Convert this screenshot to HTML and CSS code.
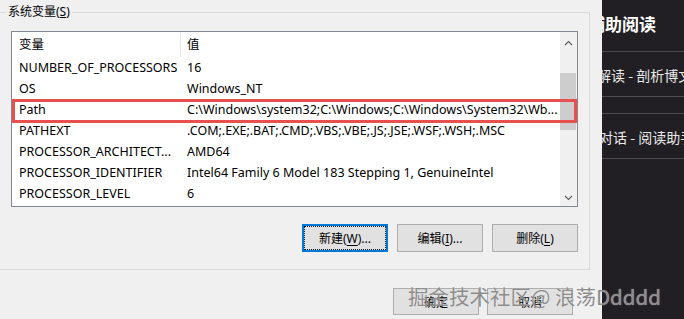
FILE: index.html
```html
<!DOCTYPE html>
<html lang="zh-CN">
<head>
    <meta charset="UTF-8">
    <title>环境变量</title>
    <link rel="stylesheet" href="styles.css">
</head>
<body>
    <div class="screen">
        <div class="dialog">
            <fieldset class="group">
                <legend class="group-title">系统变量(<u>S</u>)</legend>
                <div class="list">
                    <div class="list-body">
                        <div class="row head"><span class="name">变量</span><span class="value">值</span></div>
                        <div class="row"><span class="name">NUMBER_OF_PROCESSORS</span><span class="value">16</span></div>
                        <div class="row"><span class="name">OS</span><span class="value">Windows_NT</span></div>
                        <div class="row"><span class="name">Path</span><span class="value">C:\Windows\system32;C:\Windows;C:\Windows\System32\Wb...</span></div>
                        <div class="row"><span class="name">PATHEXT</span><span class="value">.COM;.EXE;.BAT;.CMD;.VBS;.VBE;.JS;.JSE;.WSF;.WSH;.MSC</span></div>
                        <div class="row"><span class="name">PROCESSOR_ARCHITECT...</span><span class="value">AMD64</span></div>
                        <div class="row"><span class="name">PROCESSOR_IDENTIFIER</span><span class="value">Intel64 Family 6 Model 183 Stepping 1, GenuineIntel</span></div>
                        <div class="row"><span class="name">PROCESSOR_LEVEL</span><span class="value">6</span></div>
                    </div>
                    <div class="scrollbar">
                        <span class="arrow">
                            <svg width="9" height="6" viewBox="0 0 9 6"><path d="M1 5 L4.5 1.5 L8 5" fill="none" stroke="#606060" stroke-width="1.2"/></svg>
                        </span>
                        <span class="track"><span class="thumb"></span></span>
                        <span class="arrow">
                            <svg width="9" height="6" viewBox="0 0 9 6"><path d="M1 1 L4.5 4.5 L8 1" fill="none" stroke="#606060" stroke-width="1.2"/></svg>
                        </span>
                    </div>
                    <!-- annotation box round the Path row -->
                    <div class="mark"></div>
                </div>
                <div class="actions">
                    <button class="btn focused">新建(<u>W</u>)...</button>
                    <button class="btn">编辑(<u>I</u>)...</button>
                    <button class="btn">删除(<u>L</u>)</button>
                </div>
            </fieldset>
            <div class="footer">
                <button class="btn short">确定</button>
                <button class="btn short">取消</button>
            </div>
        </div>

        <aside class="side">
            <div class="side-title">辅助阅读</div>
            <div class="side-item">解读 - 剖析博文</div>
            <div class="side-item spaced">对话 - 阅读助手</div>
        </aside>

        <div class="watermark">掘金技术社区@ 浪荡Ddddd</div>
    </div>
</body>
</html>
```

FILE: styles.css
```css
body {
    margin: 0;
    background-color: #f0f0f0;
    color: #000;
    font-family: "Noto Sans", "Noto Sans CJK SC", sans-serif;
    font-size: 12px;
}

.screen {
    position: relative;
    display: flex;
    width: 684px;
    height: 319px;
    overflow: hidden;
}

.dialog {
    flex: none;
    width: 602px;
    display: flex;
    flex-direction: column;
}

.group {
    margin: 4px 12px 0 0;
    padding: 11px 11px 17px 11px;
    border: 1px solid #d9d9d9;
    border-left: 0;
    min-width: 0;
}

.group-title {
    margin-left: -5px;
    padding: 0 2px;
    line-height: 16px;
}

.list {
    position: relative;
    display: flex;
    height: 174px;
    border: 1px solid #828790;
    background-color: #fff;
    font-size: 12.5px;
}

.list-body {
    flex: 1;
    overflow: hidden;
}

.row {
    display: flex;
    height: 21px;
    line-height: 21px;
    white-space: nowrap;
}

.row.head {
    height: 25px;
    line-height: 25px;
}

.name {
    flex: none;
    width: 162px;
    padding-left: 7px;
}

.value {
    padding-left: 6px;
}

.head .name {
    border-right: 1px solid #e5e5e5;
    width: 161px;
}

.scrollbar {
    flex: none;
    width: 17px;
    display: flex;
    flex-direction: column;
    background-color: #f0f0f0;
}

.arrow {
    height: 17px;
    display: flex;
    align-items: center;
    justify-content: center;
}

.arrow:first-child {
    height: 22px;
}

.track {
    flex: 1;
}

.thumb {
    display: block;
    margin: 19px 1px 0 0;
    height: 57px;
    background-color: #cdcdcd;
}

.mark {
    position: absolute;
    left: 0;
    top: 67px;
    width: 565px;
    height: 24px;
    box-sizing: border-box;
    border: 3px solid #e8504f;
}

.actions {
    display: flex;
    justify-content: flex-end;
    gap: 9px;
    margin-top: 17px;
}

.btn {
    width: 86px;
    height: 28px;
    padding: 0;
    background-color: #e1e1e1;
    border: 1px solid #adadad;
    color: #000;
    font-family: inherit;
    font-size: 12px;
}

.btn u {
    text-underline-offset: 2px;
}

.btn.focused {
    border-color: #0078d7;
    box-shadow: inset 0 0 0 1px #0078d7;
    outline: 1px dotted #1a1a1a;
    outline-offset: -3px;
}

.btn.short {
    height: 27px;
}

.footer {
    display: flex;
    justify-content: flex-end;
    gap: 8px;
    padding: 18px 29px 0 0;
}

.side {
    flex: 1;
    overflow: hidden;
    background-color: #221f24;
    color: #e8e8e8;
    font-family: "Noto Sans CJK SC", sans-serif;
    white-space: nowrap;
}

.side-title {
    height: 51px;
    line-height: 48px;
    border-bottom: 1px solid #4e4c50;
    font-size: 17px;
    font-weight: bold;
    color: #fff;
    text-indent: -14px;
}

.side-item {
    height: 44px;
    line-height: 46px;
    border-bottom: 1px solid #4e4c50;
    font-size: 14px;
    text-indent: -5px;
}

.side-item.spaced {
    margin-top: 16px;
    border-top: 1px solid #4e4c50;
    text-indent: -3px;
}

.watermark {
    position: absolute;
    left: 408px;
    top: 282px;
    font-family: "Noto Sans CJK SC", sans-serif;
    font-size: 20.5px;
    line-height: 28px;
    color: #8c8c8c;
    white-space: nowrap;
    text-shadow: 0 0 1px rgba(255, 255, 255, 0.7);
}
```
